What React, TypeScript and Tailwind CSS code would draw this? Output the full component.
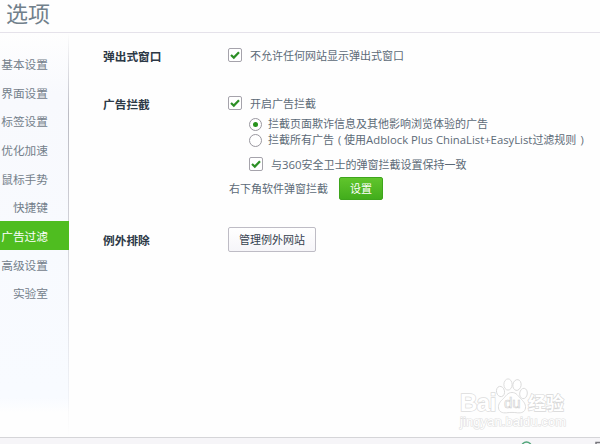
import type { ReactNode } from 'react';

const menuItems = ['基本设置', '界面设置', '标签设置', '优化加速', '鼠标手势', '快捷键', '广告过滤', '高级设置', '实验室'];
const activeItem = '广告过滤';

function Checkbox() {
    return (
        <span className="flex h-[14px] w-[14px] shrink-0 items-center justify-center rounded-[2px] border border-[#a5a3ab] bg-white">
            <svg className="h-[10px] w-[10px]" viewBox="0 0 10 10" fill="none" stroke="#2c8f25" strokeWidth={2.2}>
                <path d="M1 5L3.8 7.6L9 2.2" />
            </svg>
        </span>
    );
}

function Radio({ checked = false }: { checked?: boolean }) {
    return (
        <span className="flex h-[13px] w-[13px] shrink-0 items-center justify-center rounded-full border border-[#99979f] bg-white">
            {checked ? <span className="h-[5px] w-[5px] rounded-full bg-[#27921c]" /> : null}
        </span>
    );
}

function Section({ title, className, children }: { title: string; className: string; children: ReactNode }) {
    return (
        <section className={`flex ${className}`}>
            <h2 className="h-4 w-[125px] shrink-0 text-[11.7px] font-bold leading-4 text-[#2c3946]">{title}</h2>
            <div>{children}</div>
        </section>
    );
}

function Watermark() {
    return (
        <div className="absolute left-[460px] top-[378px] h-[52px] w-[112px] font-['Liberation_Sans','Noto_Sans_CJK_SC',sans-serif] font-normal text-white [paint-order:stroke_fill]">
            <span className="absolute left-0 top-[13px] text-[24px] font-bold leading-[24px] tracking-[-0.5px] [-webkit-text-stroke:1.4px_#dcdcdc]">Bai</span>
            <svg className="absolute left-[35px] top-0 h-[36px] w-[34px] [paint-order:normal]" viewBox="0 0 34 36" fill="#fff" stroke="#d9d9d9" strokeWidth={0.9}>
                <ellipse cx="5.5" cy="13.5" rx="4" ry="5.2" transform="rotate(-12 5.5 13.5)" />
                <ellipse cx="13" cy="6.5" rx="4.1" ry="5.6" />
                <ellipse cx="22" cy="7" rx="4.1" ry="5.4" transform="rotate(10 22 7)" />
                <ellipse cx="28.5" cy="15.5" rx="3.8" ry="5.2" transform="rotate(8 28.5 15.5)" />
                <path d="M17 14.5C12.5 14.5 11 18 8.5 20.5C5.5 23.2 3 26 3.5 30C4 34 7.5 35.2 11.5 34.8C15 34.3 19 34.3 22.5 34.8C26.5 35.2 30 34 30.5 30C31 26 28.3 23.2 25.5 20.5C23 18 21.5 14.5 17 14.5Z" />
            </svg>
            <span className="absolute left-[44px] top-[16px] text-[15px] leading-[18px] [paint-order:normal] [-webkit-text-stroke:0.6px_#cfcfcf]">du</span>
            <span className="absolute left-[68px] top-[17px] text-[18px] font-bold leading-[18px] [-webkit-text-stroke:1.3px_#d8d8d8]">经验</span>
            <span className="absolute left-0 top-[37px] text-[13px] leading-[13px] tracking-[0.08px] [-webkit-text-stroke:1.2px_#e0e0e0]">jingyan.baidu.com</span>
        </div>
    );
}

export default function App() {
    return (
        <div className="relative flex h-[444px] w-[600px] flex-col overflow-hidden whitespace-nowrap bg-[#fefefe] font-['Open_Sans','Noto_Sans_CJK_SC',sans-serif] text-[11px] text-[#5c6a77]">
            <header className="h-[33px] shrink-0 border-b border-[#e5e2ea] pl-[6px]">
                <h1 className="text-[22px] font-normal leading-[26px] text-[#71808b]">选项</h1>
            </header>

            <div className="flex min-h-0 flex-1">
                <aside className="flex w-[69px] shrink-0 bg-linear-to-b from-[#fefefe] via-[#f8f9fd] via-15% to-[#f8fbff] to-88%">
                    <div className="flex w-full bg-linear-to-b from-transparent from-90% to-[#fefefe] to-94%">
                        <nav className="-mr-px flex-1 pt-[16px]">
                            {menuItems.map((item) => (
                                <div
                                    key={item}
                                    className={`relative flex h-[28.7px] items-center justify-end pr-[21px] pt-[2.5px] text-[11.7px] ${
                                        item === activeItem ? 'z-10 bg-[#4fbd20] text-white' : 'text-[#74808b]'
                                    }`}
                                >
                                    {item}
                                </div>
                            ))}
                        </nav>
                        <div className="w-px bg-linear-to-b from-transparent via-[#bcbcc4] via-20% to-transparent" />
                    </div>
                </aside>

                <main className="flex-1 pl-[34px] pt-[15px]">
                    <Section title="弹出式窗口" className="h-[48px]">
                        <label className="flex h-[14px] items-center gap-[8px]">
                            <Checkbox />
                            <span className="pt-[2px]">不允许任何网站显示弹出式窗口</span>
                        </label>
                    </Section>

                    <Section title="广告拦截" className="h-[131px]">
                        <label className="flex h-[14px] items-center gap-[8px]">
                            <Checkbox />
                            <span className="pt-[2px]">开启广告拦截</span>
                        </label>
                        <div className="mt-[6px] pl-[21px]">
                            <label className="flex h-4 items-center gap-[6px]">
                                <Radio checked />
                                拦截页面欺诈信息及其他影响浏览体验的广告
                            </label>
                            <label className="flex h-4 items-center gap-[6px]">
                                <Radio />
                                <span>
                                    拦截所有广告
                                    <span className="pl-[4px]">(</span> 使用
                                    <span className="text-[11.3px]">Adblock Plus ChinaList+EasyList</span>
                                    过滤规则
                                    <span className="pl-[4px]">)</span>
                                </span>
                            </label>
                            <label className="mt-[8px] flex h-4 items-center gap-[8px]">
                                <Checkbox />
                                <span className="pt-[2px]">
                                    与<span className="text-[11.4px]">360</span>安全卫士的弹窗拦截设置保持一致
                                </span>
                            </label>
                        </div>
                        <div className="mt-[5px] flex items-center gap-[12px]">
                            <span className="w-[99px] pl-px pt-[2px]">右下角软件弹窗拦截</span>
                            <button type="button" className="h-[23px] w-[44px] rounded-[2px] border border-[#3ea51c] bg-linear-to-b from-[#60c52c] to-[#42ad1c] pt-[2px] text-white">
                                设置
                            </button>
                        </div>
                    </Section>

                    <Section title="例外排除" className="pt-[5px]">
                        <button type="button" className="-mt-[6px] h-[25px] w-[88px] rounded-[2px] border border-[#bebcc5] bg-linear-to-b from-white to-[#f6f5f9] pt-[2px] text-[#35424f]">
                            管理例外网站
                        </button>
                    </Section>
                </main>
            </div>

            <footer className="flex h-[7px] shrink-0 justify-end overflow-hidden border-t border-[#d5d5d8] bg-[#f6f5f8]">
                <svg className="h-[6px] w-[80px]" viewBox="0 0 80 6" fill="none">
                    <circle cx="6.5" cy="9" r="5" stroke="#4fa579" strokeWidth={1.4} />
                    <path d="M76 6V4.5H80" stroke="#77777c" strokeWidth={1.5} />
                </svg>
            </footer>

            <Watermark />
        </div>
    );
}
